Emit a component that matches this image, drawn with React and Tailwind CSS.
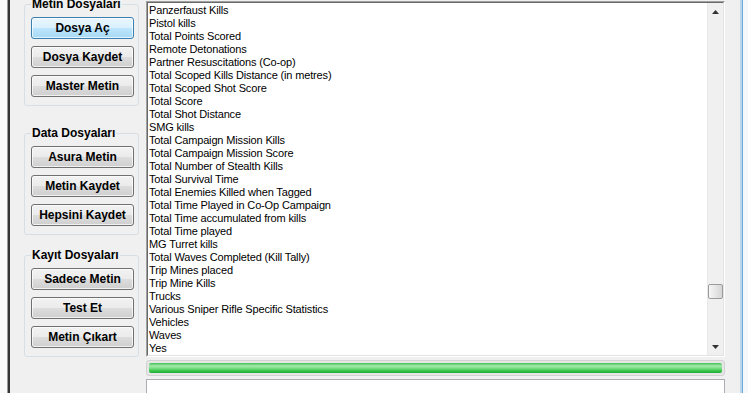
import React from "react";

const items = [
  "Panzerfaust Kills",
  "Pistol kills",
  "Total Points Scored",
  "Remote Detonations",
  "Partner Resuscitations (Co-op)",
  "Total Scoped Kills Distance (in metres)",
  "Total Scoped Shot Score",
  "Total Score",
  "Total Shot Distance",
  "SMG kills",
  "Total Campaign Mission Kills",
  "Total Campaign Mission Score",
  "Total Number of Stealth Kills",
  "Total Survival Time",
  "Total Enemies Killed when Tagged",
  "Total Time Played in Co-Op Campaign",
  "Total Time accumulated from kills",
  "Total Time played",
  "MG Turret kills",
  "Total Waves Completed (Kill Tally)",
  "Trip Mines placed",
  "Trip Mine Kills",
  "Trucks",
  "Various Sniper Rifle Specific Statistics",
  "Vehicles",
  "Waves",
  "Yes",
];

function Btn({ children, active }) {
  return (
    <button
      className={
        active
          ? "h-[22px] w-[103px] rounded-[3px] border border-[#3c7fb1] bg-[linear-gradient(to_bottom,#eaf6fd,#d9f0fc_50%,#bee6fd_50%,#a7d9f5)] text-[12px] font-bold leading-[20px] text-black shadow-[inset_0_0_0_1px_rgba(255,255,255,0.7)]"
          : "h-[22px] w-[103px] rounded-[3px] border border-[#707070] bg-[linear-gradient(to_bottom,#f2f2f2,#ebebeb_50%,#dddddd_50%,#cfcfcf)] text-[12px] font-bold leading-[20px] text-black shadow-[inset_0_0_0_1px_rgba(255,255,255,0.7)]"
      }
    >
      {children}
    </button>
  );
}

function Group({ title, buttons, className }) {
  return (
    <fieldset
      className={
        "m-0 ml-[14px] w-[115px] shrink-0 rounded-[3px] border border-[#d5dfe5] pl-[6px] pr-[4px] pt-[6px] pb-[8px] " +
        className
      }
    >
      <legend className="px-[1px] text-[12px] font-bold leading-[14px] text-black">
        {title}
      </legend>
      <div className="flex flex-col gap-[7px]">
        {buttons.map((b) => (
          <Btn key={b} active={b === "Dosya Aç"}>
            {b}
          </Btn>
        ))}
      </div>
    </fieldset>
  );
}

function Arrow({ down }) {
  return (
    <svg width="7" height="4" viewBox="0 0 7 4">
      {down ? (
        <polygon points="0,0 7,0 3.5,4" fill="#333" />
      ) : (
        <polygon points="0,4 7,4 3.5,0" fill="#333" />
      )}
    </svg>
  );
}

export default function App() {
  return (
    <div className="flex h-[393px] w-[748px] overflow-hidden bg-[#f0f0f0] font-['Liberation_Sans',Arial,sans-serif]">
      <div className="w-[7px] shrink-0 bg-[#fafafa]" />
      <div className="w-[1px] shrink-0 bg-[#9a9a9a]" />
      <div className="w-[2px] shrink-0 bg-[#353535]" />

      <div className="flex w-[136px] shrink-0 flex-col">
        <Group
          title="Metin Dosyaları"
          buttons={["Dosya Aç", "Dosya Kaydet", "Master Metin"]}
          className="mt-[-3px]"
        />
        <Group
          title="Data Dosyaları"
          buttons={["Asura Metin", "Metin Kaydet", "Hepsini Kaydet"]}
          className="mt-[20px]"
        />
        <Group
          title="Kayıt Dosyaları"
          buttons={["Sadece Metin", "Test Et", "Metin Çıkart"]}
          className="mt-[13px]"
        />
      </div>

      <div className="flex w-[579px] shrink-0 flex-col">
        <div className="mt-[1px] h-[356px] shrink-0 border border-t-[#a0a0a0] border-l-[#a0a0a0] border-r-white border-b-white">
          <div className="flex h-full border border-t-[#696969] border-l-[#696969] border-r-[#e3e3e3] border-b-[#e3e3e3] bg-white">
            <div className="flex-1 pl-[1px] pt-[1px]">
              {items.map((t) => (
                <div
                  key={t}
                  className="h-[13px] whitespace-nowrap text-[11px] leading-[13px] tracking-[-0.15px] text-black"
                >
                  {t}
                </div>
              ))}
            </div>
            <div className="flex w-[16px] flex-col border-l border-[#e8e8e8] bg-[#f0f0f0]">
              <div className="flex h-[17px] items-center justify-center">
                <Arrow />
              </div>
              <div className="flex-1">
                <div className="mt-[264px] h-[15px] w-[15px] rounded-[2px] border border-[#9a9a9a] bg-[linear-gradient(to_right,#f6f6f6,#e6e6e6_50%,#d6d6d6)]" />
              </div>
              <div className="flex h-[17px] items-center justify-center">
                <Arrow down />
              </div>
            </div>
          </div>
        </div>

        <div className="mt-[3px] h-[16px] shrink-0 rounded-[3px] border border-[#d2d2d2] bg-[#e6e6e6] p-[2px]">
          <div className="h-full rounded-[2px] bg-[linear-gradient(to_bottom,#3fbf50,#a6eaae_30%,#72dc7e_55%,#35c448_80%,#22a834)]" />
        </div>

        <div className="mt-[3px] h-[30px] shrink-0 border border-[#abadb3] bg-white" />
      </div>

      <div className="w-[15px] shrink-0" />
      <div className="w-[2px] shrink-0 bg-[#b9d7ec]" />
      <div className="w-[1px] shrink-0 bg-[#6fa9d6]" />
      <div className="w-[5px] shrink-0 bg-[#f4f8fb]" />
    </div>
  );
}
